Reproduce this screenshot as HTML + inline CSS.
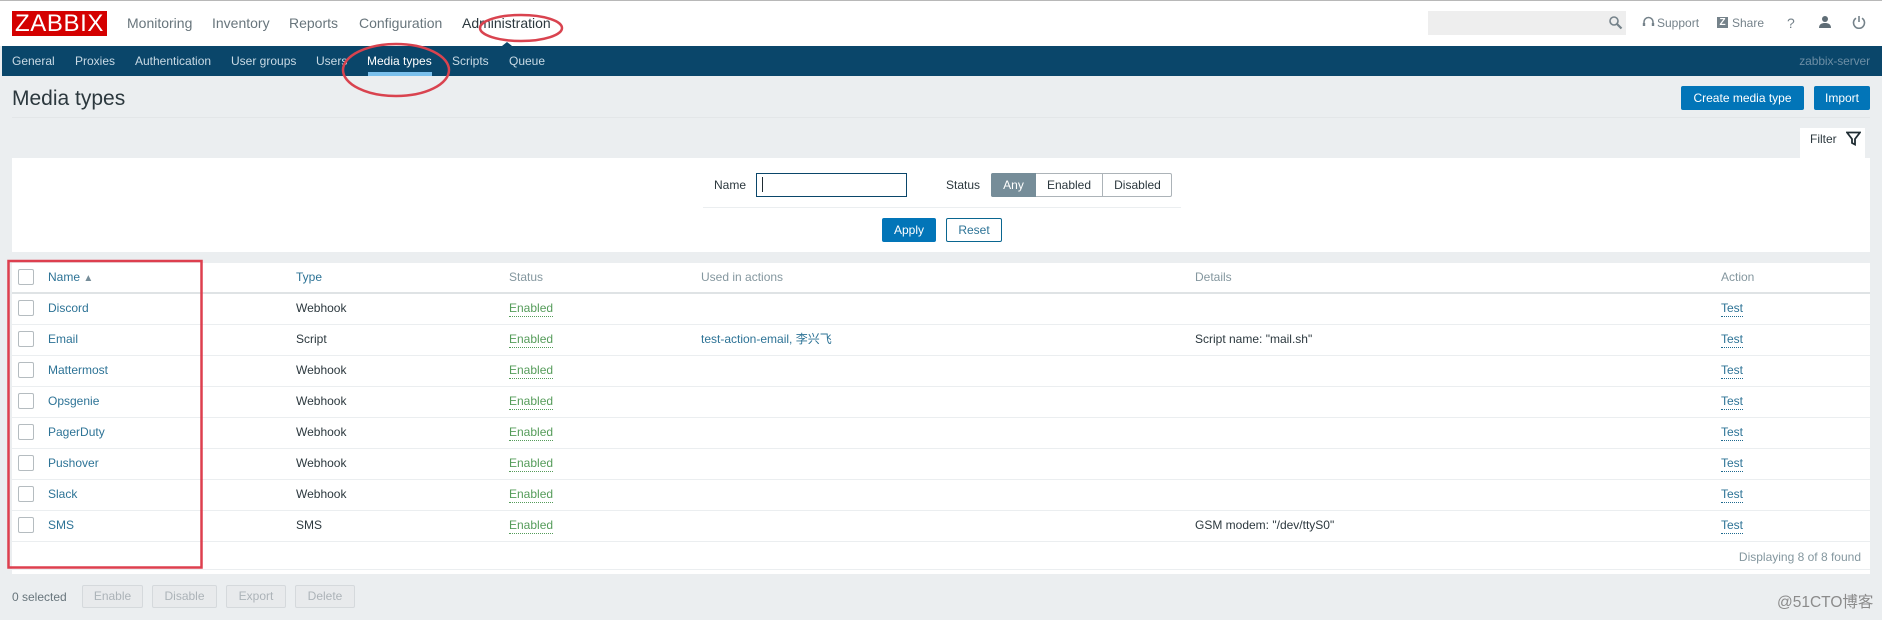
<!DOCTYPE html>
<html><head><meta charset="utf-8"><title>Media types</title>
<style>
html,body{margin:0;padding:0}
body{width:1882px;height:620px;overflow:hidden;position:relative;background:#ebeef0;font-family:"Liberation Sans","Noto Sans CJK SC",sans-serif;font-size:12px;color:#2c383e}
.a,.t{position:absolute;white-space:nowrap}
.t{height:20px;line-height:20px}
.box{position:absolute;background:#fff}
.n{font-size:14px;color:#68757c}
.s{color:#c9dae5}
.l{color:#2d7396}
.h{color:#84979f}
.g{color:#559c5a;border-bottom:1px dotted #559c5a;height:15px;line-height:15px}
.d{color:#2d7396;border-bottom:1px dotted #1f6a8f;height:15px;line-height:15px}
.cb{position:absolute;left:18px;width:14px;height:14px;border:1px solid #b5bcc0;border-radius:2px;background:#fff}
.ln{position:absolute;left:12px;width:1858px;height:1px;background:#ebeef0}
.btn{position:absolute;box-sizing:border-box;text-align:center;border-radius:2px;line-height:24px;height:24px}
.p{background:#0275b8;color:#fff}
.dis{position:absolute;box-sizing:border-box;height:23px;line-height:21px;text-align:center;border:1px solid #d5d9dc;background:#e8eaec;color:#acb3b8;border-radius:2px}
</style></head><body>
<div class="box" style="left:0;top:0;width:1882px;height:46px"></div>
<div class="a" style="left:0;top:0;width:1882px;height:1px;background:#b8b8b8"></div>
<div class="a" style="left:12px;top:11px;width:95px;height:25px;background:#d40000;color:#fff;font-size:24px;line-height:26px;text-align:center;letter-spacing:.6px">ZABBIX</div>
<span class="t n" style="left:127px;top:13px">Monitoring</span>
<span class="t n" style="left:212px;top:13px">Inventory</span>
<span class="t n" style="left:289px;top:13px">Reports</span>
<span class="t n" style="left:359px;top:13px">Configuration</span>
<span class="t n" style="left:462px;top:13px;color:#2c383e">Administration</span>
<div class="a" style="left:1428px;top:11px;width:198px;height:24px;background:#eeeeee"></div>
<svg class="a" style="left:1608px;top:15px" width="15" height="15" viewBox="0 0 15 15" fill="none" stroke="#75828a" stroke-width="1.6"><circle cx="6" cy="6" r="4"/><path d="M9 9l4.5 4.5" stroke-width="2.2"/></svg>
<svg class="a" style="left:1642px;top:16px" width="13" height="13" viewBox="0 0 13 13" fill="none" stroke="#75828a" stroke-width="1.5"><path d="M2 9V6a4.5 4.5 0 0 1 9 0v3"/><path d="M2 7v3M11 7v3" stroke-width="2.4"/></svg>
<span class="t" style="left:1657px;top:13px;color:#75828a">Support</span>
<div class="a" style="left:1717px;top:17px;width:11px;height:11px;background:#75828a;color:#fff;font-size:10px;font-weight:bold;line-height:11px;text-align:center">Z</div>
<span class="t" style="left:1732px;top:13px;color:#75828a">Share</span>
<span class="t" style="left:1787px;top:13px;color:#75828a;font-size:14px">?</span>
<svg class="a" style="left:1818px;top:15px" width="14" height="14" viewBox="0 0 14 14" fill="#5f6d76"><circle cx="7" cy="4" r="3"/><path d="M1 13c0-4 3-5 6-5s6 1 6 5z"/></svg>
<svg class="a" style="left:1852px;top:15px" width="14" height="14" viewBox="0 0 14 14" fill="none" stroke="#75828a" stroke-width="1.6"><path d="M4 3.2a5.5 5.5 0 1 0 6 0M7 1v6"/></svg>

<div class="a" style="left:2px;top:46px;width:1880px;height:30px;background:#0a466a"></div>
<span class="t s" style="left:12px;top:51px">General</span>
<span class="t s" style="left:75px;top:51px">Proxies</span>
<span class="t s" style="left:135px;top:51px">Authentication</span>
<span class="t s" style="left:231px;top:51px">User groups</span>
<span class="t s" style="left:316px;top:51px">Users</span>
<span class="t" style="left:367px;top:51px;color:#fff">Media types</span>
<span class="t s" style="left:452px;top:51px">Scripts</span>
<span class="t s" style="left:509px;top:51px">Queue</span>
<div class="a" style="left:368px;top:72px;width:64px;height:4px;background:#7ac0ec"></div>
<div class="a" style="left:502px;top:42px;width:0;height:0;border-left:5px solid transparent;border-right:5px solid transparent;border-bottom:4px solid #0a466a"></div>
<span class="t" style="right:12px;top:51px;color:#6c8ea5;letter-spacing:-.1px">zabbix-server</span>

<span class="t" style="left:12px;top:89px;font-size:21px;color:#2c383e">Media types</span>
<div class="btn p" style="left:1681px;top:86px;width:123px">Create media type</div>
<div class="btn p" style="left:1814px;top:86px;width:56px">Import</div>
<div class="a" style="left:12px;top:117px;width:1858px;height:1px;background:#e3e6e8"></div>

<div class="box" style="left:1800px;top:128px;width:65px;height:32px"></div>
<span class="t" style="left:1810px;top:129px">Filter</span>
<svg class="a" style="left:1846px;top:131px" width="15" height="15" viewBox="0 0 15 15" fill="none" stroke="#1f2c33" stroke-width="1.8"><path d="M1 1.5h13L9 8v5.5L6 12V8z"/></svg>
<div class="box" style="left:12px;top:158px;width:1858px;height:94px"></div>
<span class="t" style="left:714px;top:175px">Name</span>
<div class="a" style="left:756px;top:173px;width:149px;height:22px;border:1px solid #0a466a;background:#fff"></div>
<div class="a" style="left:762px;top:177px;width:1px;height:15px;background:#1f2c33"></div>
<span class="t" style="left:946px;top:175px">Status</span>
<div class="a" style="left:991px;top:173px;width:181px;height:24px;box-sizing:border-box;border:1px solid #acb3b8;border-radius:2px;background:#fff"></div>
<div class="a" style="left:991px;top:173px;width:45px;height:24px;background:#768d99;color:#fff;text-align:center;line-height:24px;border-radius:2px 0 0 2px">Any</div>
<div class="a" style="left:1036px;top:173px;width:66px;height:24px;text-align:center;line-height:24px">Enabled</div>
<div class="a" style="left:1102px;top:173px;width:70px;height:24px;text-align:center;line-height:24px;border-left:1px solid #acb3b8;box-sizing:border-box">Disabled</div>
<div class="a" style="left:703px;top:207px;width:478px;height:1px;background:#ebeef0"></div>
<div class="btn p" style="left:882px;top:218px;width:54px">Apply</div>
<div class="btn" style="left:946px;top:218px;width:56px;border:1px solid #0a6690;color:#2d7396;line-height:22px">Reset</div>

<div class="box" style="left:12px;top:263px;width:1858px;height:311px"></div>
<div class="a" style="left:12px;top:292px;width:1858px;height:2px;background:#dfe3e5"></div>
<div class="ln" style="top:324px"></div><div class="ln" style="top:355px"></div><div class="ln" style="top:386px"></div><div class="ln" style="top:417px"></div><div class="ln" style="top:448px"></div><div class="ln" style="top:479px"></div><div class="ln" style="top:510px"></div><div class="ln" style="top:541px"></div><div class="ln" style="top:569px"></div>

<div class="cb" style="top:269px"></div>
<span class="t l" style="left:48px;top:267px">Name <span style="font-size:10px;color:#768d99">▲</span></span>
<span class="t l" style="left:296px;top:267px">Type</span>
<span class="t h" style="left:509px;top:267px">Status</span>
<span class="t h" style="left:701px;top:267px">Used in actions</span>
<span class="t h" style="left:1195px;top:267px">Details</span>
<span class="t h" style="left:1721px;top:267px">Action</span>

<div class="cb" style="top:300px"></div><span class="t l" style="left:48px;top:298px">Discord</span><span class="t" style="left:296px;top:298px">Webhook</span><span class="a g" style="left:509px;top:301px">Enabled</span><span class="a d" style="left:1721px;top:301px">Test</span>
<div class="cb" style="top:331px"></div><span class="t l" style="left:48px;top:329px">Email</span><span class="t" style="left:296px;top:329px">Script</span><span class="a g" style="left:509px;top:332px">Enabled</span><span class="t l" style="left:701px;top:329px">test-action-email, 李兴飞</span><span class="t" style="left:1195px;top:329px">Script name: "mail.sh"</span><span class="a d" style="left:1721px;top:332px">Test</span>
<div class="cb" style="top:362px"></div><span class="t l" style="left:48px;top:360px">Mattermost</span><span class="t" style="left:296px;top:360px">Webhook</span><span class="a g" style="left:509px;top:363px">Enabled</span><span class="a d" style="left:1721px;top:363px">Test</span>
<div class="cb" style="top:393px"></div><span class="t l" style="left:48px;top:391px">Opsgenie</span><span class="t" style="left:296px;top:391px">Webhook</span><span class="a g" style="left:509px;top:394px">Enabled</span><span class="a d" style="left:1721px;top:394px">Test</span>
<div class="cb" style="top:424px"></div><span class="t l" style="left:48px;top:422px">PagerDuty</span><span class="t" style="left:296px;top:422px">Webhook</span><span class="a g" style="left:509px;top:425px">Enabled</span><span class="a d" style="left:1721px;top:425px">Test</span>
<div class="cb" style="top:455px"></div><span class="t l" style="left:48px;top:453px">Pushover</span><span class="t" style="left:296px;top:453px">Webhook</span><span class="a g" style="left:509px;top:456px">Enabled</span><span class="a d" style="left:1721px;top:456px">Test</span>
<div class="cb" style="top:486px"></div><span class="t l" style="left:48px;top:484px">Slack</span><span class="t" style="left:296px;top:484px">Webhook</span><span class="a g" style="left:509px;top:487px">Enabled</span><span class="a d" style="left:1721px;top:487px">Test</span>
<div class="cb" style="top:517px"></div><span class="t l" style="left:48px;top:515px">SMS</span><span class="t" style="left:296px;top:515px">SMS</span><span class="a g" style="left:509px;top:518px">Enabled</span><span class="t" style="left:1195px;top:515px">GSM modem: "/dev/ttyS0"</span><span class="a d" style="left:1721px;top:518px">Test</span>

<span class="t" style="right:21px;top:547px;color:#84979f">Displaying 8 of 8 found</span>
<span class="t" style="left:12px;top:587px;color:#68757c">0 selected</span>
<div class="dis" style="left:82px;top:585px;width:61px">Enable</div>
<div class="dis" style="left:152px;top:585px;width:65px">Disable</div>
<div class="dis" style="left:226px;top:585px;width:60px">Export</div>
<div class="dis" style="left:295px;top:585px;width:60px">Delete</div>
<span class="t" style="left:1777px;top:593px;color:#8b8b8b;font-size:15.5px">@51CTO博客</span>

<svg class="a" style="left:0;top:0" width="1882" height="620" fill="none">
<rect x="8.5" y="261" width="193" height="306.5" stroke="#dd3f4e" stroke-width="2.5"/>
<ellipse cx="521" cy="28" rx="41" ry="13" stroke="#d9434f" stroke-width="2.5"/>
<ellipse cx="396" cy="70" rx="53" ry="26" stroke="#d9434f" stroke-width="2.5"/>
</svg>
</body></html>
